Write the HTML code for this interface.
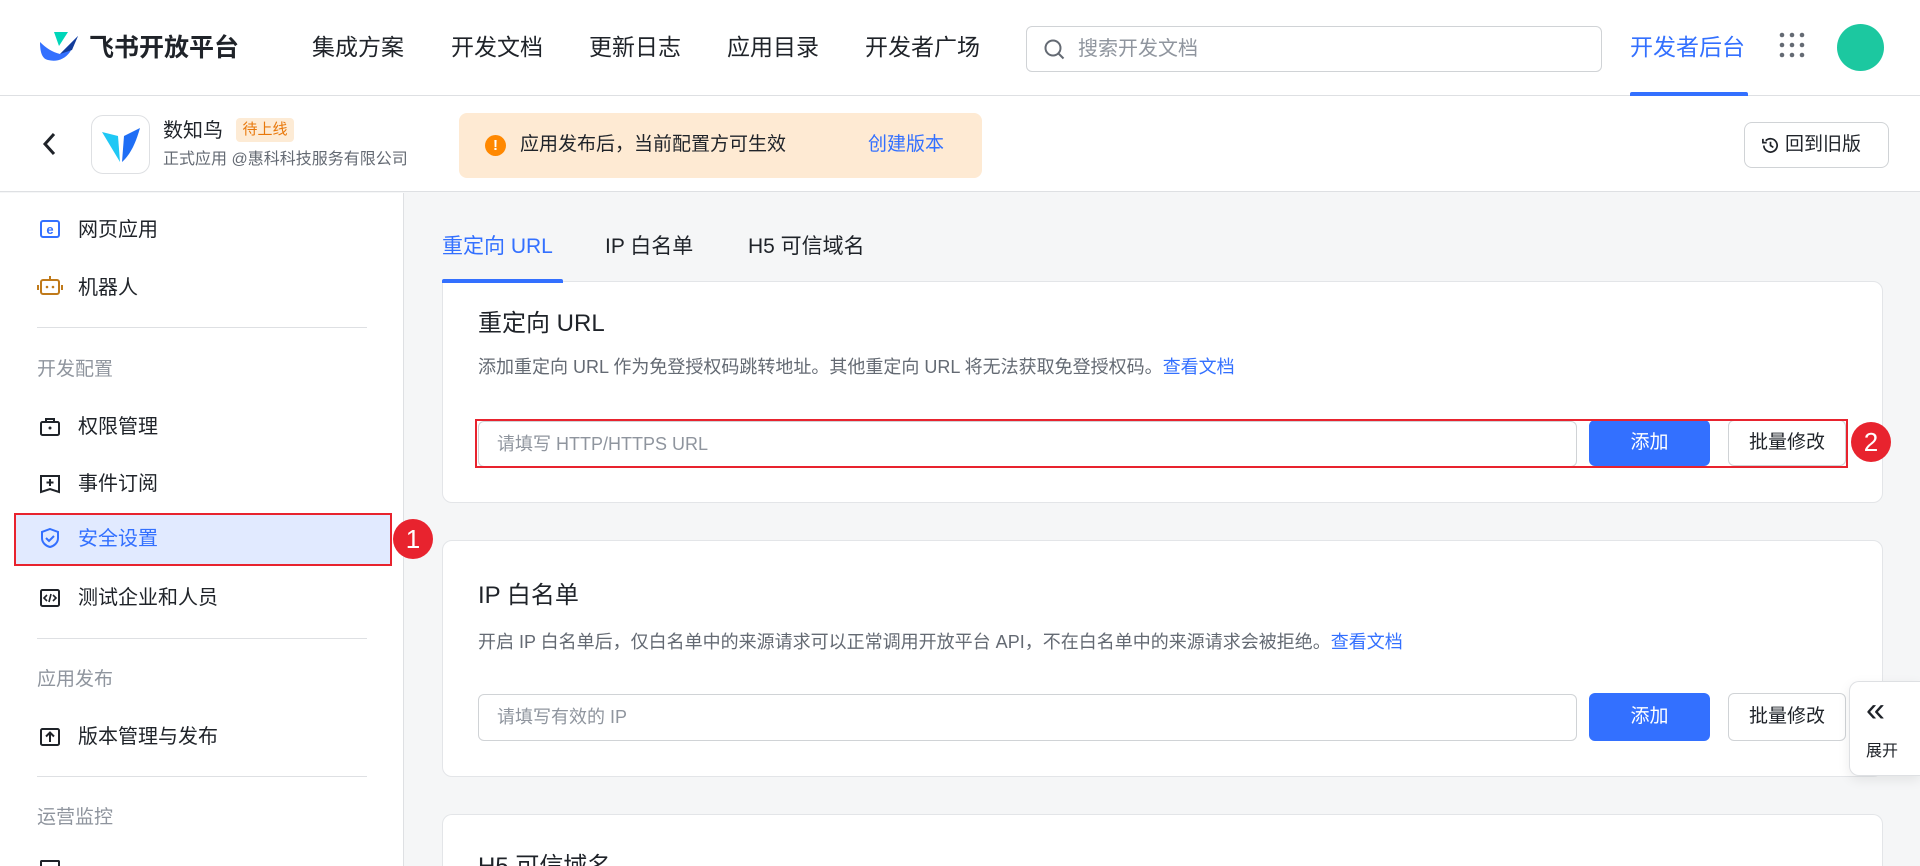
<!DOCTYPE html>
<html style="width:1920px;height:866px;overflow:hidden"><head><meta charset="utf-8"><style>
*{margin:0;padding:0;box-sizing:border-box}
body{width:1920px;height:866px;overflow:hidden;background:#f5f6f7;font-family:"Liberation Sans","Noto Sans CJK SC",sans-serif;color:#1f2329;position:relative}
.a{position:absolute;white-space:nowrap}
.hdr{left:0;top:0;width:1920px;height:96px;background:#fff;border-bottom:1px solid #dee0e3}
.nav{top:31px;font-size:23px;line-height:32px;color:#1f2329}
.bar{left:0;top:96px;width:1920px;height:96px;background:#fff;border-bottom:1px solid #dee0e3}
.side{left:0;top:193px;width:404px;height:673px;background:#fff;border-right:1px solid #dee0e3}
.si{left:78px;font-size:20px;line-height:28px;color:#1f2329}
.sg{left:37px;font-size:19px;line-height:28px;color:#8f959e}
.dv{left:37px;width:330px;height:1px;background:#dee0e3}
.ic{left:40px;width:20px;height:20px}
.card{background:#fff;border:1px solid #e3e5e8;border-radius:10px}
.t{font-size:24px;line-height:32px;color:#1f2329}
.d{font-size:18px;line-height:26px;color:#646a73}
.lk{color:#3370ff}
.inp{background:#fff;border:1px solid #d0d3d6;border-radius:6px;font-size:18px;color:#8f959e;padding-left:18px;line-height:44px}
.btn{background:#3370ff;color:#fff;border-radius:6px;font-size:19px;text-align:center;line-height:46px}
.btn2{background:#fff;border:1px solid #d0d3d6;border-radius:6px;font-size:19px;text-align:center;line-height:44px;color:#1f2329}
.badge{width:40px;height:40px;border-radius:50%;background:#e8232e;color:#fff;font-size:26px;text-align:center;line-height:40px}
</style></head><body>
<div class="a hdr"></div>
<svg class="a" style="left:40px;top:32px" width="38" height="30" viewBox="0 0 38 30"><path d="M14 0h14l-9 14z" fill="#00d6b9"/><path d="M0 10c6 6 12 10 20 12l18-18-8 16c-6 8-14 10-22 8-5-1-8-6-8-18z" fill="#3370ff"/><path d="M20 22l18-18-6 14z" fill="#133c9a"/></svg>
<div class="a" style="left:89px;top:31px;font-size:25px;font-weight:bold;line-height:34px;color:#1f2329">飞书开放平台</div>
<div class="a nav" style="left:312px">集成方案</div>
<div class="a nav" style="left:451px">开发文档</div>
<div class="a nav" style="left:589px">更新日志</div>
<div class="a nav" style="left:727px">应用目录</div>
<div class="a nav" style="left:865px">开发者广场</div>
<div class="a" style="left:1026px;top:26px;width:576px;height:46px;border:1px solid #d0d3d6;border-radius:6px;background:#fff"></div>
<svg class="a" style="left:1043px;top:38px" width="24" height="24" viewBox="0 0 24 24"><circle cx="10" cy="10" r="7.5" fill="none" stroke="#646a73" stroke-width="2"/><path d="M15.5 15.5l5 5" stroke="#646a73" stroke-width="2"/></svg>
<div class="a" style="left:1078px;top:34px;font-size:20px;line-height:30px;color:#8f959e">搜索开发文档</div>
<div class="a" style="left:1630px;top:31px;font-size:23px;line-height:32px;color:#3370ff">开发者后台</div>
<div class="a" style="left:1630px;top:92px;width:118px;height:4px;background:#3370ff;border-radius:2px 2px 0 0"></div>
<svg class="a" style="left:1778px;top:30px" width="28" height="30" viewBox="0 0 28 30"><g fill="#646a73"><circle cx="4" cy="5" r="2.3"/><circle cx="14" cy="5" r="2.3"/><circle cx="24" cy="5" r="2.3"/><circle cx="4" cy="15" r="2.3"/><circle cx="14" cy="15" r="2.3"/><circle cx="24" cy="15" r="2.3"/><circle cx="4" cy="25" r="2.3"/><circle cx="14" cy="25" r="2.3"/><circle cx="24" cy="25" r="2.3"/></g></svg>
<div class="a" style="left:1837px;top:24px;width:47px;height:47px;border-radius:50%;background:#1cc8a0"></div>

<div class="a bar"></div>
<svg class="a" style="left:40px;top:131px" width="18" height="26" viewBox="0 0 18 26"><path d="M14 3L5 13l9 10" fill="none" stroke="#1f2329" stroke-width="3"/></svg>
<div class="a" style="left:91px;top:115px;width:59px;height:59px;border:1px solid #dee0e3;border-radius:12px;background:#fff"></div>
<svg class="a" style="left:100px;top:124px" width="42" height="42" viewBox="0 0 42 42"><path d="M2 8l16 4 2 26z" fill="#1fc8f5"/><path d="M22 38L24 12l16-8c-4 14-9 26-18 34z" fill="#1f6ef5"/></svg>
<div class="a" style="left:163px;top:117px;font-size:20px;line-height:28px;color:#1f2329">数知鸟</div>
<div class="a" style="left:236px;top:118px;width:58px;height:24px;background:#fdebd5;border-radius:4px;color:#e8780b;font-size:15px;line-height:24px;text-align:center">待上线</div>
<div class="a" style="left:163px;top:148px;font-size:16px;line-height:24px;color:#646a73">正式应用 @惠科科技服务有限公司</div>
<div class="a" style="left:459px;top:113px;width:523px;height:65px;background:#feead3;border-radius:8px"></div>
<div class="a" style="left:485px;top:135px;width:21px;height:21px;border-radius:50%;background:#ff8800;color:#fff;font-size:15px;font-weight:bold;text-align:center;line-height:21px">!</div>
<div class="a" style="left:520px;top:131px;font-size:19px;line-height:28px;color:#1f2329">应用发布后，当前配置方可生效</div>
<div class="a" style="left:868px;top:131px;font-size:19px;line-height:28px;color:#3370ff">创建版本</div>
<div class="a" style="left:1744px;top:122px;width:145px;height:46px;border:1px solid #d0d3d6;border-radius:8px;background:#fff"></div>
<svg class="a" style="left:1761px;top:136px" width="19" height="19" viewBox="0 0 20 20"><path d="M3 10a7 7 0 1 0 2-5" fill="none" stroke="#1f2329" stroke-width="1.8"/><path d="M2 3v4h4" fill="none" stroke="#1f2329" stroke-width="1.8"/><path d="M10 6v4l3 2" fill="none" stroke="#1f2329" stroke-width="1.8"/></svg>
<div class="a" style="left:1785px;top:131px;font-size:19px;line-height:28px;color:#1f2329">回到旧版</div>

<div class="a side"></div>
<svg class="a ic" style="top:219px" viewBox="0 0 20 20"><rect x="1" y="2" width="18" height="16" rx="2" fill="none" stroke="#3370ff" stroke-width="2"/><text x="10" y="15" font-size="13" font-weight="bold" fill="#3370ff" text-anchor="middle" font-family="Liberation Sans">e</text></svg>
<div class="a si" style="top:216px">网页应用</div>
<svg class="a ic" style="top:276px;left:37px;width:26px" viewBox="0 0 26 20"><rect x="4" y="4" width="18" height="14" rx="2" fill="none" stroke="#c07a1a" stroke-width="2"/><path d="M13 0v4M1 9v5M25 9v5" stroke="#c07a1a" stroke-width="2"/><circle cx="10" cy="11" r="1.3" fill="#c07a1a"/><circle cx="16" cy="11" r="1.3" fill="#c07a1a"/></svg>
<div class="a si" style="top:274px">机器人</div>
<div class="a dv" style="top:327px"></div>
<div class="a sg" style="top:356px">开发配置</div>
<svg class="a ic" style="top:417px" viewBox="0 0 20 20"><rect x="1" y="5" width="18" height="13" rx="1.5" fill="none" stroke="#1f2329" stroke-width="2"/><path d="M6 5V2h8v3" fill="none" stroke="#1f2329" stroke-width="2"/><circle cx="10" cy="11" r="1.5" fill="#1f2329"/></svg>
<div class="a si" style="top:413px">权限管理</div>
<svg class="a ic" style="top:474px" viewBox="0 0 20 20"><path d="M1 2h18v16l-9-3-9 3z" fill="none" stroke="#1f2329" stroke-width="2"/><path d="M10 5v7M6.5 8.5h7" stroke="#1f2329" stroke-width="2"/></svg>
<div class="a si" style="top:470px">事件订阅</div>
<div class="a" style="left:14px;top:513px;width:378px;height:53px;background:#e1eaff;border:2px solid #e8232e"></div>
<svg class="a ic" style="top:528px" viewBox="0 0 20 20"><path d="M10 1l8 3v6c0 5-4 8-8 9-4-1-8-4-8-9V4z" fill="none" stroke="#3370ff" stroke-width="2"/><path d="M6 10l3 3 5-5" fill="none" stroke="#3370ff" stroke-width="2"/></svg>
<div class="a si" style="top:525px;color:#3370ff">安全设置</div>
<div class="a badge" style="left:393px;top:519px">1</div>
<svg class="a ic" style="top:588px" viewBox="0 0 20 20"><rect x="1" y="2" width="18" height="16" rx="1.5" fill="none" stroke="#1f2329" stroke-width="2"/><path d="M7 7l-3 3 3 3M13 7l3 3-3 3M11 6l-2 8" fill="none" stroke="#1f2329" stroke-width="1.6"/></svg>
<div class="a si" style="top:584px">测试企业和人员</div>
<div class="a dv" style="top:638px"></div>
<div class="a sg" style="top:666px">应用发布</div>
<svg class="a ic" style="top:727px" viewBox="0 0 20 20"><rect x="1" y="2" width="18" height="16" rx="1.5" fill="none" stroke="#1f2329" stroke-width="2"/><path d="M10 15V6M6 9.5l4-4 4 4" fill="none" stroke="#1f2329" stroke-width="2"/></svg>
<div class="a si" style="top:723px">版本管理与发布</div>
<div class="a dv" style="top:776px"></div>
<div class="a sg" style="top:804px">运营监控</div>
<div class="a" style="left:40px;top:860px;width:20px;height:6px;border:2px solid #1f2329;border-bottom:none;border-radius:2px 2px 0 0"></div>

<div class="a" style="left:442px;top:232px;font-size:21px;line-height:30px;color:#3370ff">重定向 URL</div>
<div class="a" style="left:605px;top:232px;font-size:21px;line-height:30px;color:#1f2329">IP 白名单</div>
<div class="a" style="left:748px;top:232px;font-size:21px;line-height:30px;color:#1f2329">H5 可信域名</div>
<div class="a card" style="left:442px;top:281px;width:1441px;height:222px;border-top-left-radius:0"></div>
<div class="a" style="left:442px;top:279px;width:121px;height:4px;background:#3370ff;border-radius:2px 2px 0 0"></div>
<div class="a t" style="left:478px;top:308px">重定向 URL</div>
<div class="a d" style="left:478px;top:354px">添加重定向 URL 作为免登授权码跳转地址。其他重定向 URL 将无法获取免登授权码。<span class="lk">查看文档</span></div>
<div class="a inp" style="left:478px;top:421px;width:1099px;height:46px">请填写 HTTP/HTTPS URL</div>
<div class="a btn" style="left:1589px;top:420px;width:121px;height:46px">添加</div>
<div class="a btn2" style="left:1728px;top:420px;width:118px;height:46px">批量修改</div>
<div class="a" style="left:475px;top:419px;width:1373px;height:49px;border:2px solid #e8232e"></div>
<div class="a badge" style="left:1851px;top:422px">2</div>

<div class="a card" style="left:442px;top:540px;width:1441px;height:237px"></div>
<div class="a t" style="left:478px;top:580px">IP 白名单</div>
<div class="a d" style="left:478px;top:629px">开启 IP 白名单后，仅白名单中的来源请求可以正常调用开放平台 API，不在白名单中的来源请求会被拒绝。<span class="lk">查看文档</span></div>
<div class="a inp" style="left:478px;top:694px;width:1099px;height:47px">请填写有效的 IP</div>
<div class="a btn" style="left:1589px;top:693px;width:121px;height:48px;line-height:48px">添加</div>
<div class="a btn2" style="left:1728px;top:693px;width:118px;height:48px;line-height:46px">批量修改</div>
<div class="a" style="left:1849px;top:681px;width:71px;height:95px;background:#fff;border:1px solid #dee0e3;border-right:none;border-radius:10px 0 0 10px;box-shadow:0 4px 12px rgba(0,0,0,.08)"></div>
<div class="a" style="left:1866px;top:690px;font-size:34px;line-height:40px;color:#1f2329">«</div>
<div class="a" style="left:1866px;top:740px;font-size:16px;line-height:24px;color:#1f2329">展开</div>

<div class="a card" style="left:442px;top:814px;width:1441px;height:52px;border-bottom:none;border-radius:10px 10px 0 0;overflow:hidden"><div class="a t" style="left:35px;top:36px">H5 可信域名</div></div>
</body></html>
